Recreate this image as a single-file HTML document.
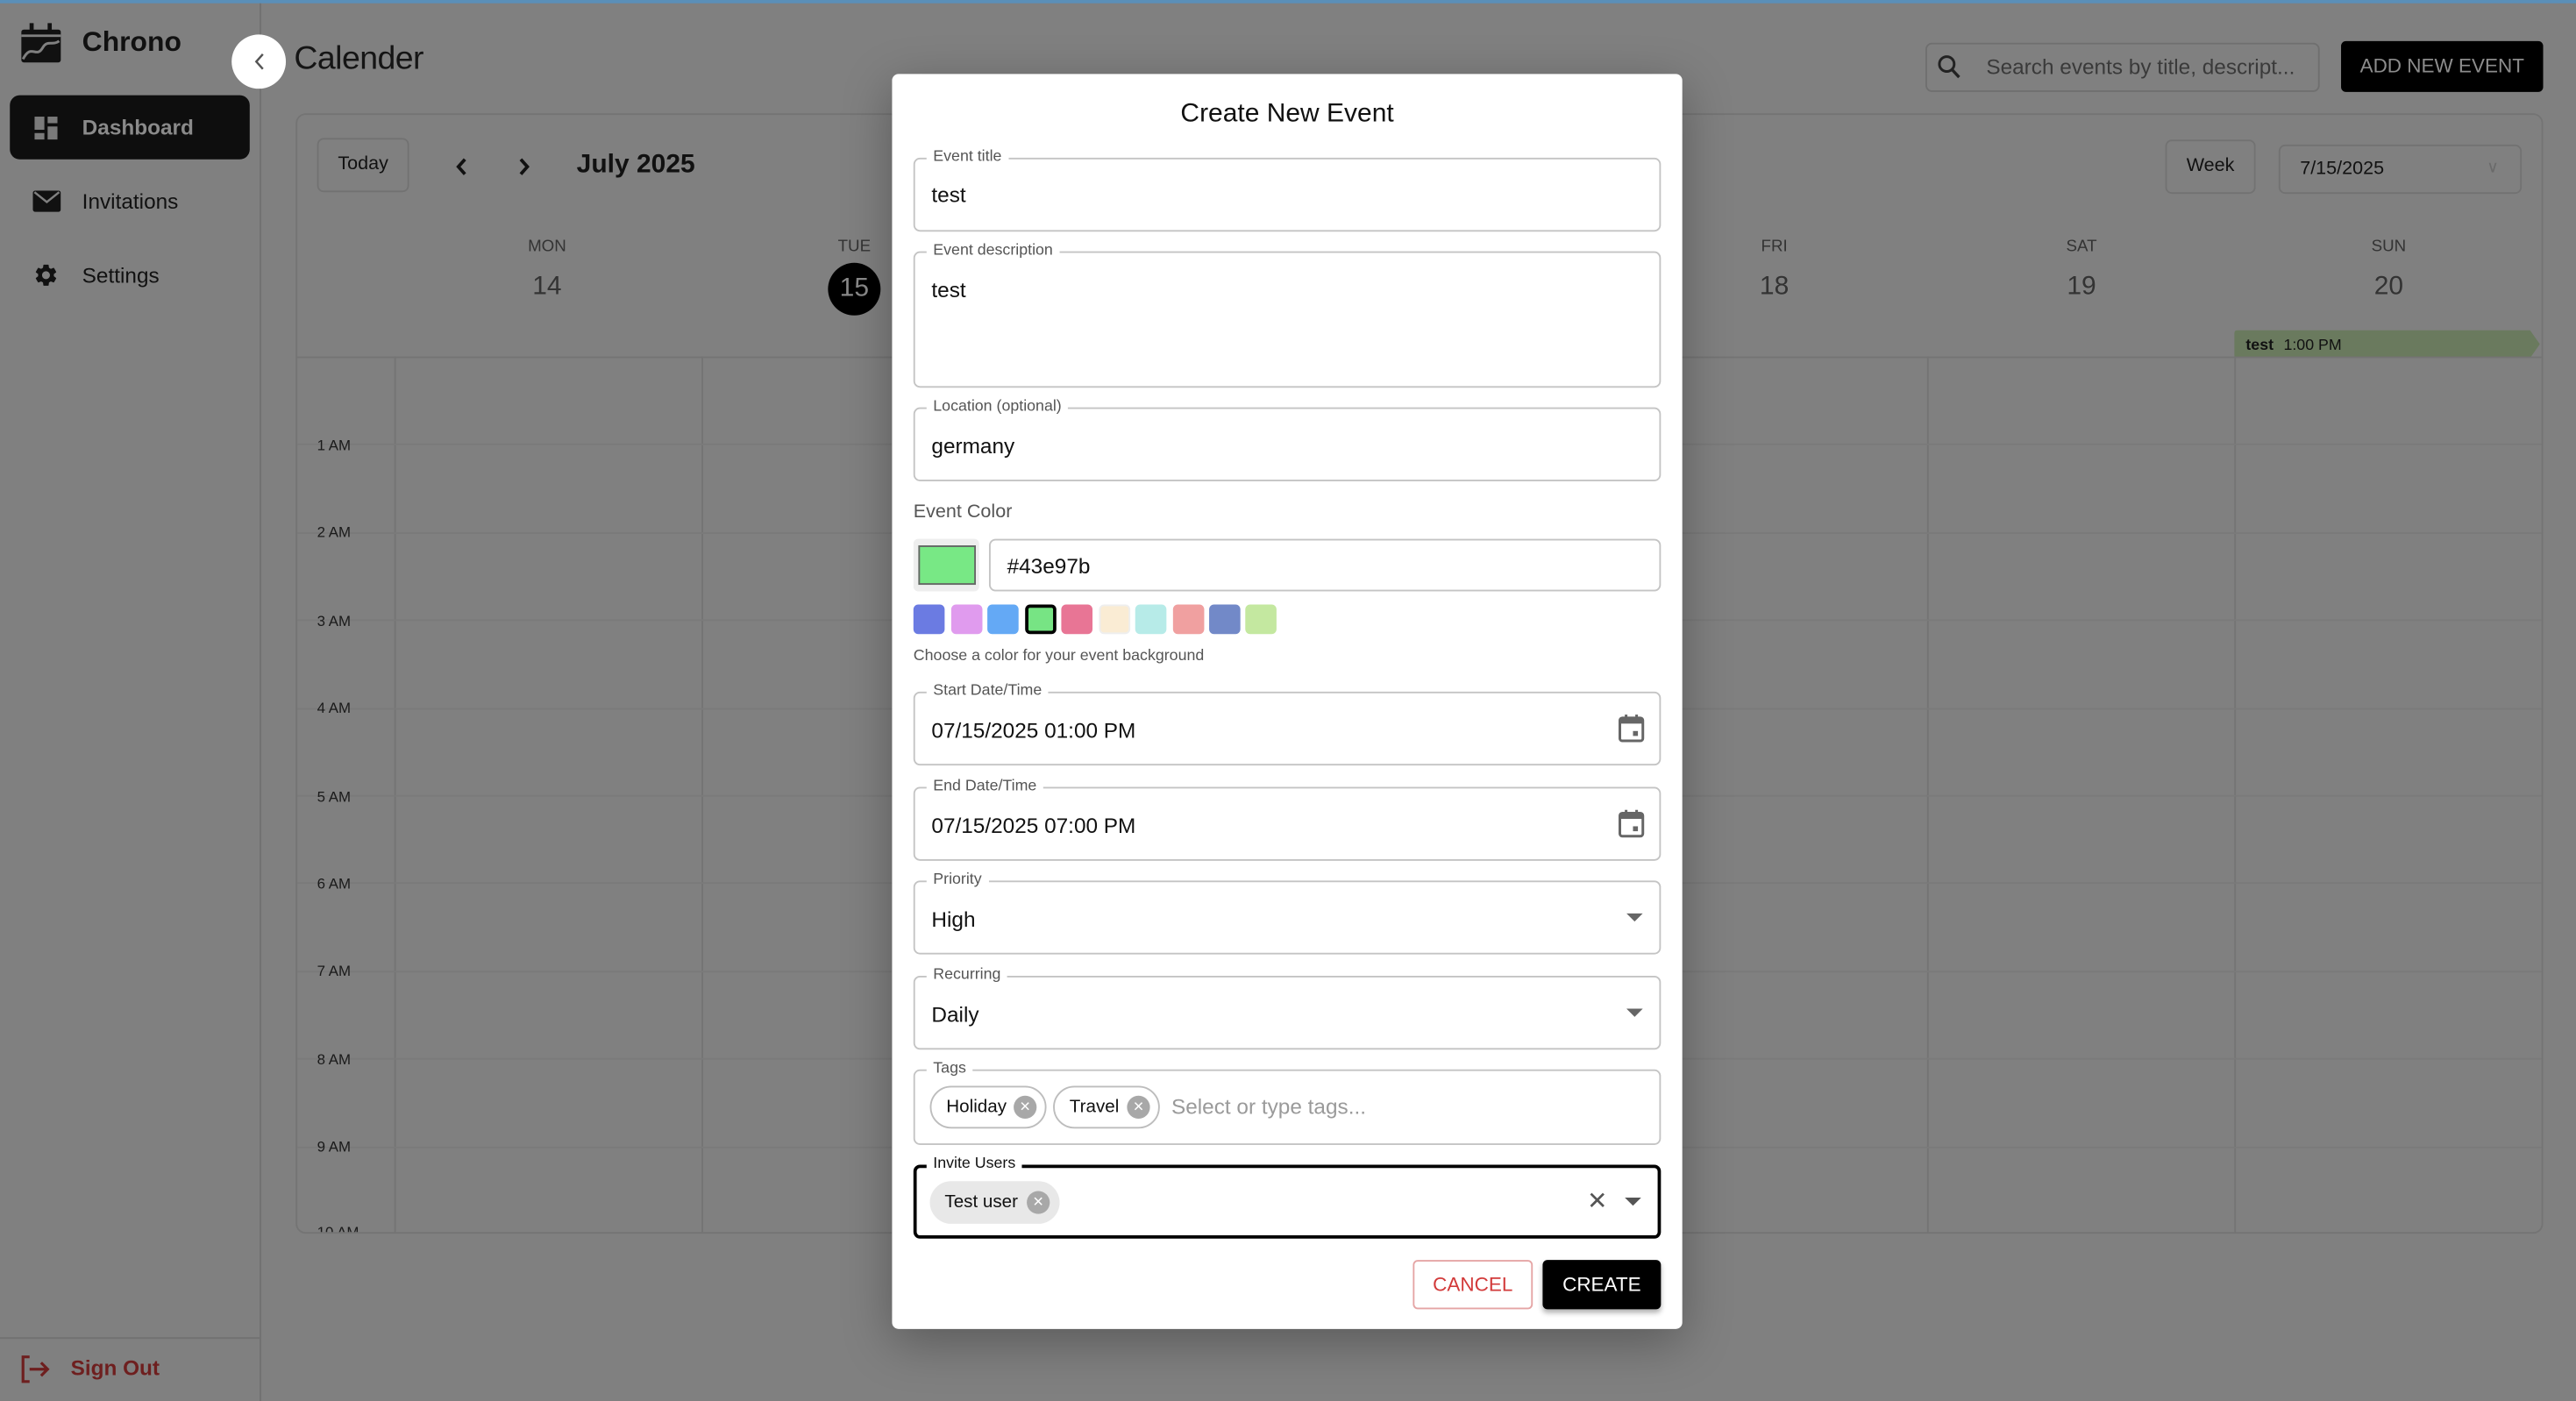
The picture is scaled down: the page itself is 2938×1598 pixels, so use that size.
<!DOCTYPE html>
<html><head><meta charset="utf-8"><style>
*{box-sizing:border-box;margin:0;padding:0}
html,body{width:2938px;height:1598px;overflow:hidden;background:#808080}
#w{position:absolute;left:0;top:0;width:1568px;height:853px;transform:scale(1.87372);transform-origin:0 0;font-family:"Liberation Sans",Arial,sans-serif;background:#808080;color:#111}
.a{position:absolute}
.gl{position:absolute;background:#747474}
.fld{position:absolute;left:556px;width:455px;border:1px solid #c4c4c4;border-radius:4px;background:#fff}
.lab{position:absolute;left:7px;top:-7px;background:#fff;padding:0 4px;font-size:9.5px;color:#555;line-height:12px}
.val{position:absolute;left:10px;font-size:13px;color:#111}
.sw{position:absolute;top:368px;width:19px;height:18px;border-radius:3px}
.chip{position:absolute;top:661px;height:26px;border:1px solid #bdbdbd;border-radius:13px;font-size:11px;line-height:24px;padding-left:9px;background:#fff}
.x{position:absolute;top:5px;width:14px;height:14px;border-radius:50%;background:#a8a8a8;color:#fff;font-size:11px;line-height:14px;text-align:center}
.hr{position:absolute;left:193px;font-size:9px;color:#1a1a1a}
.dn{position:absolute;top:145px;font-size:10px;color:#333;width:40px;text-align:center}
.dd{position:absolute;top:166px;font-size:16px;color:#333;width:40px;text-align:center}
</style></head><body><div id="w">
<div class="a" style="left:0;top:0;width:1568px;height:2px;background:#5a8fb8"></div>
<!-- sidebar -->
<div class="a" style="left:158px;top:2px;width:1px;height:851px;background:#717171"></div>
<div class="a" style="left:0;top:814px;width:158px;height:1px;background:#717171"></div>
<svg class="a" style="left:12px;top:14px" width="26" height="25" viewBox="0 0 26 25"><rect x="1" y="4" width="24" height="20" rx="1.5" fill="#111"/><rect x="6" y="0" width="2.5" height="6" fill="#111"/><rect x="17" y="0" width="2.5" height="6" fill="#111"/><rect x="1" y="7" width="24" height="1.5" fill="#808080"/><path d="M2 22 C7 12 10 22 14 15 C17 10 20 14 24 11" stroke="#808080" stroke-width="1.6" fill="none"/></svg>
<div class="a" style="left:50px;top:16px;font-size:17px;font-weight:bold">Chrono</div>
<div class="a" style="left:141px;top:21px;width:33px;height:33px;border-radius:50%;background:#fff"></div>
<svg class="a" style="left:152px;top:31px" width="12" height="13"><path d="M8 2 L4 6.5 L8 11" stroke="#555" stroke-width="1.3" fill="none"/></svg>
<div class="a" style="left:179px;top:25px;font-size:20px;color:#151515;letter-spacing:-0.3px">Calender</div>
<div class="a" style="left:6px;top:58px;width:146px;height:39px;border-radius:6px;background:#0e0e0e"></div>
<svg class="a" style="left:21px;top:71px" width="14" height="14"><rect x="0" y="0" width="6" height="8" fill="#7a7a7a"/><rect x="8" y="0" width="6" height="4" fill="#7a7a7a"/><rect x="0" y="10" width="6" height="4" fill="#7a7a7a"/><rect x="8" y="6" width="6" height="8" fill="#7a7a7a"/></svg>
<div class="a" style="left:50px;top:70px;font-size:13px;font-weight:bold;color:#8a8a8a">Dashboard</div>
<svg class="a" style="left:20px;top:116px" width="17" height="13"><rect width="17" height="13" rx="1.5" fill="#111"/><path d="M1 1 L8.5 7 L16 1" stroke="#808080" stroke-width="1.3" fill="none"/></svg>
<div class="a" style="left:50px;top:115px;font-size:13px">Invitations</div>
<svg class="a" style="left:20px;top:159px" width="16" height="17" viewBox="0 0 24 24"><path fill="#111" d="M19.14 12.94c.04-.3.06-.61.06-.94s-.02-.64-.07-.94l2.03-1.58a.49.49 0 0 0 .12-.61l-1.92-3.32a.49.49 0 0 0-.59-.22l-2.39.96c-.5-.38-1.03-.7-1.62-.94l-.36-2.54a.48.48 0 0 0-.48-.41h-3.84c-.24 0-.43.17-.47.41l-.36 2.54c-.59.24-1.13.57-1.62.94l-2.39-.96a.49.49 0 0 0-.59.22L2.74 8.87c-.12.21-.08.47.12.61l2.03 1.58c-.05.3-.09.63-.09.94s.02.64.07.94l-2.03 1.58a.49.49 0 0 0-.12.61l1.92 3.32c.12.22.37.29.59.22l2.39-.96c.5.38 1.03.7 1.62.94l.36 2.54c.05.24.24.41.48.41h3.84c.24 0 .44-.17.47-.41l.36-2.54c.59-.24 1.13-.56 1.62-.94l2.39.96c.22.08.47 0 .59-.22l1.92-3.32c.12-.22.07-.47-.12-.61l-2.01-1.58zM12 15.6c-1.98 0-3.6-1.62-3.6-3.6s1.62-3.6 3.6-3.6 3.6 1.62 3.6 3.6-1.62 3.6-3.6 3.6z"/></svg>
<div class="a" style="left:50px;top:160px;font-size:13px">Settings</div>
<svg class="a" style="left:12px;top:824px" width="20" height="19"><path d="M6 2 H2 V17 H6" stroke="#6e1f1f" stroke-width="1.7" fill="none"/><path d="M6 9.5 H17 M13 5.5 L17 9.5 L13 13.5" stroke="#6e1f1f" stroke-width="1.7" fill="none"/></svg>
<div class="a" style="left:43px;top:825px;font-size:13px;font-weight:bold;color:#6e1f1f">Sign Out</div>
<!-- top right -->
<div class="a" style="left:1172px;top:26px;width:240px;height:30px;border:1px solid #6f6f6f;border-radius:4px"></div>
<svg class="a" style="left:1179px;top:33px" width="15" height="16"><circle cx="6" cy="6" r="4.5" stroke="#222" stroke-width="1.6" fill="none"/><path d="M9.3 9.5 L13.5 14" stroke="#222" stroke-width="1.8"/></svg>
<div class="a" style="left:1209px;top:33px;font-size:13px;color:#3a3a3a">Search events by title, descript...</div>
<div class="a" style="left:1425px;top:25px;width:123px;height:31px;background:#000;border-radius:3px;color:#9a9a9a;font-size:12px;line-height:31px;text-align:center;color:#8c8c8c">ADD NEW EVENT</div>
<!-- calendar -->
<div class="a" style="left:180px;top:69px;width:1368px;height:682px;border:1px solid #747474;border-radius:6px"></div>
<div class="a" style="left:193px;top:84px;width:56px;height:33px;border:1px solid #727272;border-radius:4px;font-size:11.5px;line-height:31px;text-align:center">Today</div>
<svg class="a" style="left:275px;top:95px" width="12" height="13"><path d="M8 2 L4 6.5 L8 11" stroke="#111" stroke-width="2" fill="none"/></svg>
<svg class="a" style="left:313px;top:95px" width="12" height="13"><path d="M4 2 L8 6.5 L4 11" stroke="#111" stroke-width="2" fill="none"/></svg>
<div class="a" style="left:351px;top:92px;font-size:16px;font-weight:bold">July 2025</div>
<div class="a" style="left:1318px;top:85px;width:55px;height:33px;border:1px solid #727272;border-radius:4px;font-size:11.5px;line-height:31px;text-align:center">Week</div>
<div class="a" style="left:1387px;top:88px;width:148px;height:30px;border:1px solid #727272;border-radius:4px;font-size:11.5px;line-height:28px;padding-left:12px">7/15/2025<span style="position:absolute;right:13px;color:#6a6a6a;font-size:10px">&#8744;</span></div>
<div class="dn" style="left:313px">MON</div><div class="dd" style="left:313px">14</div>
<div class="dn" style="left:500px">TUE</div>
<div class="a" style="left:504px;top:160px;width:32px;height:32px;border-radius:50%;background:#000;color:#8a8a8a;font-size:16px;line-height:32px;text-align:center">15</div>
<div class="dn" style="left:1060px">FRI</div><div class="dd" style="left:1060px">18</div>
<div class="dn" style="left:1247px">SAT</div><div class="dd" style="left:1247px">19</div>
<div class="dn" style="left:1434px">SUN</div><div class="dd" style="left:1434px">20</div>
<svg class="a" style="left:1360px;top:201px" width="186" height="17"><path d="M0 2 Q0 0 2 0 H180 L186 8.5 L180 17 H2 Q0 17 0 15Z" fill="#6a7a5e"/><text x="7" y="12" font-family="Liberation Sans" font-size="9.5" font-weight="bold" fill="#111">test</text><text x="30" y="12" font-family="Liberation Sans" font-size="9.5" fill="#111">1:00 PM</text></svg>
<div class="gl" style="left:181px;top:217px;width:1366px;height:1px"></div>
<div class="gl" style="left:240px;top:217px;width:1px;height:533px"></div>
<div class="gl" style="left:427px;top:217px;width:1px;height:533px"></div>
<div class="gl" style="left:1173px;top:217px;width:1px;height:533px"></div>
<div class="gl" style="left:1360px;top:217px;width:1px;height:533px"></div>
<div class="gl" style="left:181px;top:270px;width:1366px;height:1px;background:#7a7a7a"></div>
<div class="gl" style="left:181px;top:324px;width:1366px;height:1px;background:#7a7a7a"></div>
<div class="gl" style="left:181px;top:377px;width:1366px;height:1px;background:#7a7a7a"></div>
<div class="gl" style="left:181px;top:431px;width:1366px;height:1px;background:#7a7a7a"></div>
<div class="gl" style="left:181px;top:484px;width:1366px;height:1px;background:#7a7a7a"></div>
<div class="gl" style="left:181px;top:537px;width:1366px;height:1px;background:#7a7a7a"></div>
<div class="gl" style="left:181px;top:591px;width:1366px;height:1px;background:#7a7a7a"></div>
<div class="gl" style="left:181px;top:644px;width:1366px;height:1px;background:#7a7a7a"></div>
<div class="gl" style="left:181px;top:698px;width:1366px;height:1px;background:#7a7a7a"></div>
<div class="hr" style="top:266px">1 AM</div><div class="hr" style="top:319px">2 AM</div><div class="hr" style="top:373px">3 AM</div><div class="hr" style="top:426px">4 AM</div><div class="hr" style="top:480px">5 AM</div><div class="hr" style="top:533px">6 AM</div><div class="hr" style="top:586px">7 AM</div><div class="hr" style="top:640px">8 AM</div><div class="hr" style="top:693px">9 AM</div>
<div class="hr" style="top:745px;height:5px;overflow:hidden">10 AM</div>
<!-- modal -->
<div class="a" style="left:543px;top:45px;width:481px;height:764px;background:#fff;border-radius:4px;box-shadow:0 8px 30px rgba(0,0,0,.3)"></div>
<div class="a" style="left:543px;top:61px;width:481px;text-align:center;font-size:16px;color:#111">Create New Event</div>
<div class="fld" style="top:96px;height:45px"><div class="lab">Event title</div><div class="val" style="top:14px">test</div></div>
<div class="fld" style="top:153px;height:83px"><div class="lab">Event description</div><div class="val" style="top:15px">test</div></div>
<div class="fld" style="top:248px;height:45px"><div class="lab">Location (optional)</div><div class="val" style="top:15px">germany</div></div>
<div class="a" style="left:556px;top:306px;font-size:11.5px;color:#555">Event Color</div>
<div class="a" style="left:556px;top:328px;width:40px;height:32px;background:#eee;border-radius:3px"></div>
<div class="a" style="left:559px;top:332px;width:35px;height:24px;background:#78e885;border:1px solid #666"></div>
<div class="fld" style="left:602px;width:409px;top:328px;height:32px"><div class="val" style="top:8px">#43e97b</div></div>
<div class="sw" style="left:556px;background:#6b7be2"></div>
<div class="sw" style="left:579px;background:#e09bee"></div>
<div class="sw" style="left:601px;background:#64a9f5"></div>
<div class="sw" style="left:624px;background:#77e484;border:2px solid #000"></div>
<div class="sw" style="left:646px;background:#e87595"></div>
<div class="sw" style="left:669px;background:#faecd4;border:1px solid #eee"></div>
<div class="sw" style="left:691px;background:#b7ebe8"></div>
<div class="sw" style="left:714px;background:#f0a0a0"></div>
<div class="sw" style="left:736px;background:#7289c8"></div>
<div class="sw" style="left:758px;background:#c4e8a0"></div>
<div class="a" style="left:556px;top:394px;font-size:9.5px;color:#555">Choose a color for your event background</div>
<div class="fld" style="top:421px;height:45px"><div class="lab">Start Date/Time</div><div class="val" style="top:15px">07/15/2025 01:00 PM</div></div>
<div class="fld" style="top:479px;height:45px"><div class="lab">End Date/Time</div><div class="val" style="top:15px">07/15/2025 07:00 PM</div></div>
<svg class="a" style="left:985px;top:434px" width="16" height="18"><rect x="1" y="3" width="14" height="14" rx="1.5" stroke="#666" stroke-width="1.6" fill="none"/><rect x="1" y="3" width="14" height="3.5" fill="#666"/><rect x="4" y="1" width="1.6" height="4" fill="#666"/><rect x="10.4" y="1" width="1.6" height="4" fill="#666"/><rect x="9" y="11" width="3" height="3" fill="#666"/></svg>
<svg class="a" style="left:985px;top:492px" width="16" height="18"><rect x="1" y="3" width="14" height="14" rx="1.5" stroke="#666" stroke-width="1.6" fill="none"/><rect x="1" y="3" width="14" height="3.5" fill="#666"/><rect x="4" y="1" width="1.6" height="4" fill="#666"/><rect x="10.4" y="1" width="1.6" height="4" fill="#666"/><rect x="9" y="11" width="3" height="3" fill="#666"/></svg>
<div class="fld" style="top:536px;height:45px"><div class="lab">Priority</div><div class="val" style="top:15px">High</div></div>
<div class="fld" style="top:594px;height:45px"><div class="lab">Recurring</div><div class="val" style="top:15px">Daily</div></div>
<svg class="a" style="left:990px;top:556px" width="10" height="6"><path d="M0 0 H10 L5 5Z" fill="#666"/></svg>
<svg class="a" style="left:990px;top:614px" width="10" height="6"><path d="M0 0 H10 L5 5Z" fill="#666"/></svg>
<div class="fld" style="top:651px;height:46px"><div class="lab">Tags</div></div>
<div class="chip" style="left:566px;width:71px">Holiday<div class="x" style="left:50px">&#215;</div></div>
<div class="chip" style="left:641px;width:65px">Travel<div class="x" style="left:44px">&#215;</div></div>
<div class="a" style="left:713px;top:666px;font-size:13px;color:#9a9a9a">Select or type tags...</div>
<div class="fld" style="top:709px;height:45px;border:2px solid #000"><div class="lab" style="left:6px;top:-8px;color:#111">Invite Users</div></div>
<div class="chip" style="left:566px;top:719px;width:79px;border:none;background:#e8e8e8;line-height:26px;padding-left:9px">Test user<div class="x" style="left:59px;top:6px">&#215;</div></div>
<div class="a" style="left:966px;top:722px;font-size:15px;color:#555">&#10005;</div>
<svg class="a" style="left:989px;top:729px" width="10" height="6"><path d="M0 0 H10 L5 5Z" fill="#555"/></svg>
<div class="a" style="left:860px;top:767px;width:73px;height:30px;border:1px solid #e5a5a5;border-radius:3px;color:#d23a3a;font-size:12px;line-height:28px;text-align:center">CANCEL</div>
<div class="a" style="left:939px;top:767px;width:72px;height:30px;background:#000;border-radius:3px;color:#fff;font-size:12px;line-height:30px;text-align:center;box-shadow:0 2px 3px rgba(0,0,0,.3)">CREATE</div>
</div></body></html>
